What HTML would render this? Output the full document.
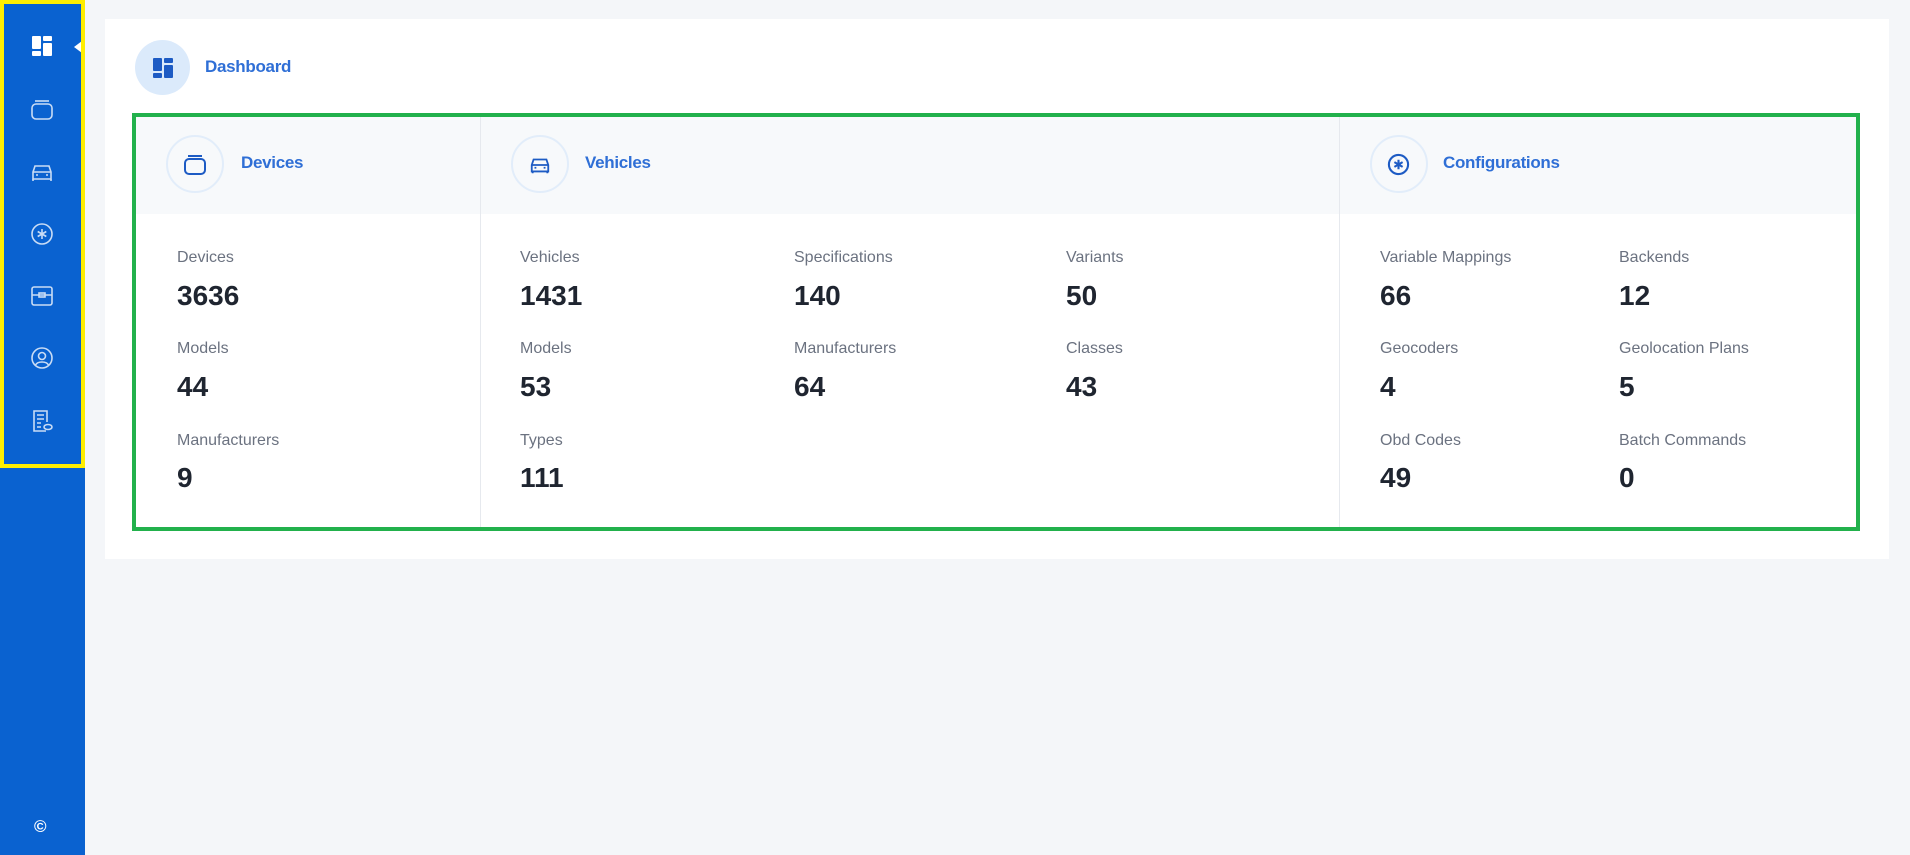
<!DOCTYPE html>
<html><head><meta charset="utf-8"><style>
*{margin:0;padding:0;box-sizing:border-box}
body{width:1910px;height:855px;background:#f4f6f9;font-family:"Liberation Sans",sans-serif;position:relative;overflow:hidden}
.side{position:absolute;left:0;top:0;width:85px;height:855px;background:#0a62d0}
.ybox{position:absolute;left:0;top:0;width:85px;height:468px;border:4px solid #ffee00}
.ic{position:absolute;left:30px;width:24px;height:24px}
.card{position:absolute;left:105px;top:19px;width:1784px;height:540px;background:#fff}
.gbox{position:absolute;left:132px;top:113px;width:1728px;height:418px;border:4px solid #22b14c;background:#fff}
.hdr{position:absolute;left:0;top:0;right:0;height:97px;background:#f7f9fb}
.div{position:absolute;top:0;bottom:0;width:1px;background:#e6e9ee}
.circ{position:absolute;width:58px;height:58px;border-radius:50%;border:2px solid #e2edfa;background:#f7f9fb}
.ht{position:absolute;font-size:17px;font-weight:bold;color:#2f6fd6;letter-spacing:-0.3px}
.lb{position:absolute;font-size:16px;color:#6b7280}
.vl{position:absolute;font-size:28px;font-weight:bold;color:#1f2530}
</style></head><body>
<div class="side">
<svg class="ic" style="top:34px" viewBox="0 0 24 24" fill="#fff"><rect x="2" y="2" width="9" height="13" rx="1"/><rect x="2" y="17" width="9" height="5" rx="1"/><rect x="13" y="2" width="9" height="5" rx="1"/><rect x="13" y="9" width="9" height="13" rx="1"/></svg>
<div style="position:absolute;left:74px;top:41px;border-right:8px solid #fff;border-top:6px solid transparent;border-bottom:6px solid transparent"></div>
<svg class="ic" style="top:98px" viewBox="0 0 24 24" fill="none" stroke="#c9dcf5" stroke-width="1.6"><rect x="2" y="6" width="20" height="15" rx="4"/><path d="M5 3h14"/></svg>
<svg class="ic" style="top:160px" viewBox="0 0 24 24" fill="none" stroke="#c9dcf5" stroke-width="1.6"><path d="M3 12l2-6h14l2 6v7H3z"/><path d="M3 12h18M6 15h2M16 15h2M3 19v2M21 19v2"/></svg>
<svg class="ic" style="top:222px" viewBox="0 0 24 24" fill="none" stroke="#c9dcf5" stroke-width="1.6"><circle cx="12" cy="12" r="10"/><path d="M12 7v10M7.7 9.5l8.6 5M7.7 14.5l8.6-5"/></svg>
<svg class="ic" style="top:284px" viewBox="0 0 24 24" fill="none" stroke="#c9dcf5" stroke-width="1.6"><rect x="2" y="3" width="20" height="18" rx="2"/><path d="M2 11h20"/><rect x="9" y="9" width="6" height="4"/></svg>
<svg class="ic" style="top:346px" viewBox="0 0 24 24" fill="none" stroke="#c9dcf5" stroke-width="1.6"><circle cx="12" cy="12" r="10"/><circle cx="12" cy="10" r="3.5"/><path d="M5.5 19c2-4 11-4 13 0"/></svg>
<svg class="ic" style="top:409px" viewBox="0 0 24 24" fill="none" stroke="#c9dcf5" stroke-width="1.6"><path d="M16 22H4V2h13v11"/><path d="M7 6h7M7 10h7M7 14h4M7 18h4"/><ellipse cx="18" cy="18" rx="4" ry="2.5"/></svg>
<div style="position:absolute;left:34px;top:817px;color:#fff;font-size:17px;font-weight:bold">©</div>
</div>
<div class="ybox"></div>
<div class="card">
<div style="position:absolute;left:30px;top:21px;width:55px;height:55px;border-radius:50%;background:#dbeafb"></div>
<svg style="position:absolute;left:46px;top:37px" width="24" height="24" viewBox="0 0 24 24" fill="#1d5bc4"><rect x="2" y="2" width="9" height="13" rx="1"/><rect x="2" y="17" width="9" height="5" rx="1"/><rect x="13" y="2" width="9" height="5" rx="1"/><rect x="13" y="9" width="9" height="13" rx="1"/></svg>
<div class="ht" style="left:100px;top:38px">Dashboard</div>
</div>
<div class="gbox">
<div class="hdr"></div>
<div class="div" style="left:344px"></div>
<div class="div" style="left:1203px"></div>
<div class="circ" style="left:30px;top:18px"></div>
<svg style="position:absolute;left:47px;top:36px" width="24" height="24" viewBox="0 0 24 24" fill="none" stroke="#1d5bc4" stroke-width="2"><rect x="2" y="6" width="20" height="15" rx="4"/><path d="M5 3h14"/></svg>
<div class="ht" style="left:105px;top:36px">Devices</div>
<div class="circ" style="left:375px;top:18px"></div>
<svg style="position:absolute;left:393px;top:37px" width="22" height="22" viewBox="0 0 24 24" fill="none" stroke="#1d5bc4" stroke-width="2"><path d="M3 12l2-6h14l2 6v7H3z"/><path d="M3 12h18M6 15h2M16 15h2M4 19v2M20 19v2"/></svg>
<div class="ht" style="left:449px;top:36px">Vehicles</div>
<div class="circ" style="left:1234px;top:18px"></div>
<svg style="position:absolute;left:1251px;top:36px" width="23" height="23" viewBox="0 0 24 24" fill="none" stroke="#1d5bc4" stroke-width="2.2"><circle cx="12" cy="12" r="10"/><path d="M12 7v10M7.7 9.5l8.6 5M7.7 14.5l8.6-5"/></svg>
<div class="ht" style="left:1307px;top:36px">Configurations</div>

<div class="lb" style="left:41px;top:132px">Devices</div><div class="vl" style="left:41px;top:163px">3636</div>
<div class="lb" style="left:41px;top:223px">Models</div><div class="vl" style="left:41px;top:254px">44</div>
<div class="lb" style="left:41px;top:315px">Manufacturers</div><div class="vl" style="left:41px;top:345px">9</div>

<div class="lb" style="left:384px;top:132px">Vehicles</div><div class="vl" style="left:384px;top:163px">1431</div>
<div class="lb" style="left:384px;top:223px">Models</div><div class="vl" style="left:384px;top:254px">53</div>
<div class="lb" style="left:384px;top:315px">Types</div><div class="vl" style="left:384px;top:345px">111</div>
<div class="lb" style="left:658px;top:132px">Specifications</div><div class="vl" style="left:658px;top:163px">140</div>
<div class="lb" style="left:658px;top:223px">Manufacturers</div><div class="vl" style="left:658px;top:254px">64</div>
<div class="lb" style="left:930px;top:132px">Variants</div><div class="vl" style="left:930px;top:163px">50</div>
<div class="lb" style="left:930px;top:223px">Classes</div><div class="vl" style="left:930px;top:254px">43</div>

<div class="lb" style="left:1244px;top:132px">Variable Mappings</div><div class="vl" style="left:1244px;top:163px">66</div>
<div class="lb" style="left:1244px;top:223px">Geocoders</div><div class="vl" style="left:1244px;top:254px">4</div>
<div class="lb" style="left:1244px;top:315px">Obd Codes</div><div class="vl" style="left:1244px;top:345px">49</div>
<div class="lb" style="left:1483px;top:132px">Backends</div><div class="vl" style="left:1483px;top:163px">12</div>
<div class="lb" style="left:1483px;top:223px">Geolocation Plans</div><div class="vl" style="left:1483px;top:254px">5</div>
<div class="lb" style="left:1483px;top:315px">Batch Commands</div><div class="vl" style="left:1483px;top:345px">0</div>
</div>
</body></html>
